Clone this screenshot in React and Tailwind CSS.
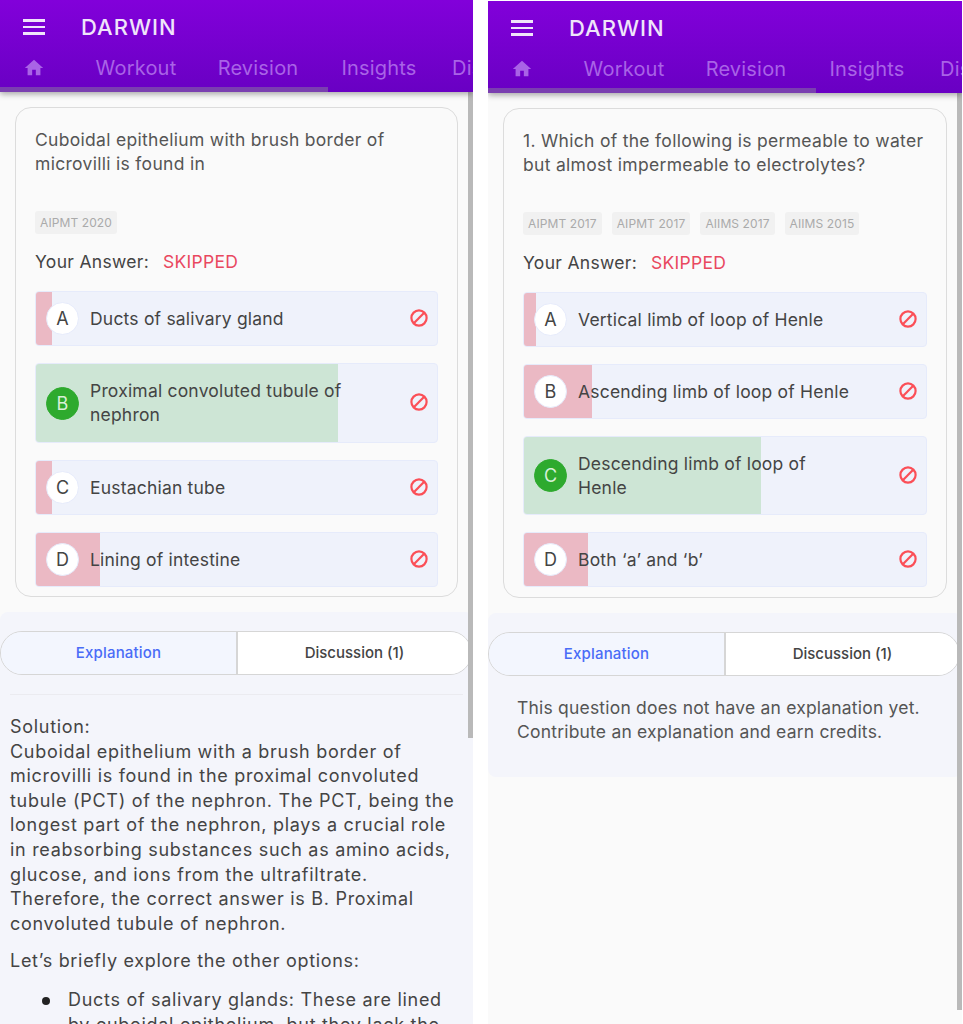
import React from 'react';

const HomeIcon = () => (
  <svg className="w-[22px] h-[22px]" viewBox="0 0 24 24" fill="currentColor">
    <path d="M10 20v-6h4v6h5v-8h3L12 3 2 12h3v8z" />
  </svg>
);

const BanIcon = () => (
  <svg className="w-[18px] h-[18px] text-[#fb4f57] shrink-0" viewBox="0 0 18 18" fill="none" stroke="currentColor" strokeWidth="2.2">
    <circle cx="9" cy="9" r="7.6" />
    <path d="M3.8 14.2 14.2 3.8" />
  </svg>
);

const Header = () => (
  <div className="relative z-10 h-[92px] shrink-0 overflow-hidden bg-gradient-to-b from-[#8200da] to-[#6900c3] shadow-[0_2px_6px_rgba(0,0,0,0.35)]">
    <div className="flex h-[54px] items-center pl-[23px]">
      <div className="flex w-[22px] flex-col gap-[4px]">
        <span className="h-[2.5px] bg-[#f0e4fa]" />
        <span className="h-[2.5px] bg-[#f0e4fa]" />
        <span className="h-[2.5px] bg-[#f0e4fa]" />
      </div>
      <div className="ml-[36px] text-[22px] font-medium tracking-[1px] text-[#f0e4fa]">DARWIN</div>
    </div>
    <div className="flex h-[28px] items-center whitespace-nowrap text-[20px] tracking-[0.2px] text-[#a963e6]">
      <div className="flex w-[68px] shrink-0 justify-center"><HomeIcon /></div>
      <div className="w-[136px] shrink-0 text-center">Workout</div>
      <div className="w-[108px] shrink-0 text-center">Revision</div>
      <div className="w-[134px] shrink-0 text-center">Insights</div>
      <div className="shrink-0 pl-[6px]">Discussion</div>
    </div>
    <div className="absolute bottom-0 left-0 h-[5px] w-[328px] bg-[#7a3fb0]" />
  </div>
);

const Option = ({ letter, text, fill, correct, height = 'h-[55px]' }) => (
  <div className={`relative flex items-center overflow-hidden rounded-[4px] border border-[#e6ebfb] bg-[#eff2fb] pl-[10px] pr-[9px] ${height}`}>
    <div className={`absolute inset-y-0 left-0 ${correct ? 'bg-[#cde5d5]' : 'bg-[#ebb9c4]'}`} style={{ width: fill }} />
    <div className={`relative flex h-[33px] w-[33px] shrink-0 items-center justify-center rounded-full border text-[18px] ${correct ? 'border-[#2eaa2e] bg-[#2eaa2e] text-[#d8f0d8]' : 'border-[#e6ebfb] bg-white text-[#444]'}`}>
      {letter}
    </div>
    <div className="relative ml-[11px] w-[277px] text-[17.5px] leading-[24px] tracking-[0.2px] text-[#444]">{text}</div>
    <div className="relative ml-auto mb-[2px]"><BanIcon /></div>
  </div>
);

const Panel = ({ question, tags, options, children, fullHeight, width }) => (
  <div className={`relative flex h-full shrink-0 flex-col overflow-hidden bg-[#fafafa] ${width}`}>
    <Header />
    <div className="px-[15px] pt-[15px]">
      <div className="h-[490px] rounded-[16px] border-[1.5px] border-[#dcdcdc] px-[19px] pt-[20px]">
        <div className="h-[76px] text-[17.5px] leading-[24px] tracking-[0.3px] text-[#555]">{question}</div>
        <div className="mt-[7px] flex gap-[10px]">
          {tags.map((t, i) => (
            <span key={i} className="rounded-[3px] bg-[#f1f1f1] px-[5px] py-[3px] text-[12px] leading-[17px] tracking-[0.1px] text-[#aaa]">{t}</span>
          ))}
        </div>
        <div className="mt-[15px] flex h-[26px] items-center text-[17.5px] tracking-[0.3px] text-[#444]">
          <span>Your Answer:</span>
          <span className="ml-[14px] text-[#e9485f]">SKIPPED</span>
        </div>
        <div className="mt-[16px] flex flex-col gap-[17px]">
          {options.map((o) => <Option key={o.letter} {...o} />)}
        </div>
      </div>
    </div>
    <div className={`mt-[15px] rounded-t-[8px] bg-[#f4f5fb] pt-[19px] ${fullHeight ? 'flex-1' : 'h-[164px] rounded-b-[8px]'}`}>
      <div className="flex h-[44px] w-[472px] overflow-hidden rounded-full border-[1.5px] border-[#d6d6d6] text-[15px] font-medium">
        <div className="flex w-[237px] items-center justify-center border-r-[2px] border-[#d6d6d6] bg-[#f3f6fe] tracking-[0.2px] text-[#4a6cf7]">Explanation</div>
        <div className="flex flex-1 items-center justify-center bg-white text-[#444]">Discussion (1)</div>
      </div>
      {children}
    </div>
  </div>
);

const leftOptions = [
  { letter: 'A', text: 'Ducts of salivary gland', fill: 16 },
  { letter: 'B', text: 'Proximal convoluted tubule of nephron', fill: 302, correct: true, height: 'h-[80px]' },
  { letter: 'C', text: 'Eustachian tube', fill: 16 },
  { letter: 'D', text: 'Lining of intestine', fill: 64 },
];

const rightOptions = [
  { letter: 'A', text: 'Vertical limb of loop of Henle', fill: 12 },
  { letter: 'B', text: 'Ascending limb of loop of Henle', fill: 68 },
  { letter: 'C', text: 'Descending limb of loop of Henle', fill: 237, correct: true, height: 'h-[79px]' },
  { letter: 'D', text: 'Both ‘a’ and ‘b’', fill: 64 },
];

export default function App() {
  return (
    <div className="flex h-[1024px] w-[963px] gap-[15px] overflow-hidden bg-white [font-family:Inter,sans-serif]">
      <Panel
        fullHeight
        width="w-[473px]"
        question="Cuboidal epithelium with brush border of microvilli is found in"
        tags={['AIPMT 2020']}
        options={leftOptions}
      >
        <div className="mx-[10px] mt-[19px] border-t border-[#ebebf0] pr-[5px] pt-[20px] text-[18px] leading-[24.6px] tracking-[0.7px] text-[#444]">
          <p>Solution:</p>
          <p>Cuboidal epithelium with a brush border of microvilli is found in the proximal convoluted tubule (PCT) of the nephron. The PCT, being the longest part of the nephron, plays a crucial role in reabsorbing substances such as amino acids, glucose, and ions from the ultrafiltrate. Therefore, the correct answer is B. Proximal convoluted tubule of nephron.</p>
          <p className="mt-[13px]">Let’s briefly explore the other options:</p>
          <ul className="mt-[14px] pl-[32px] pr-[5px]">
            <li className="flex gap-[18px]">
              <span className="mt-[9px] h-[8px] w-[8px] shrink-0 rounded-full bg-[#222]" />
              <span>Ducts of salivary glands: These are lined by cuboidal epithelium, but they lack the brush border.</span>
            </li>
          </ul>
        </div>
        <div className="absolute right-0 top-[92px] h-[646px] w-[5px] bg-[#b9b9b9]" />
      </Panel>
      <div className="h-full pt-px">
        <Panel
          width="w-[474px]"
          question="1. Which of the following is permeable to water but almost impermeable to electrolytes?"
          tags={['AIPMT 2017', 'AIPMT 2017', 'AIIMS 2017', 'AIIMS 2015']}
          options={rightOptions}
        >
          <div className="ml-[29px] mt-[20px] text-[17.5px] leading-[24px] tracking-[0.2px] text-[#555]">
            This question does not have an explanation yet. Contribute an explanation and earn credits.
          </div>
          <div className="absolute right-0 top-[91px] h-[918px] w-[5px] bg-[#b9b9b9]" />
        </Panel>
      </div>
    </div>
  );
}
